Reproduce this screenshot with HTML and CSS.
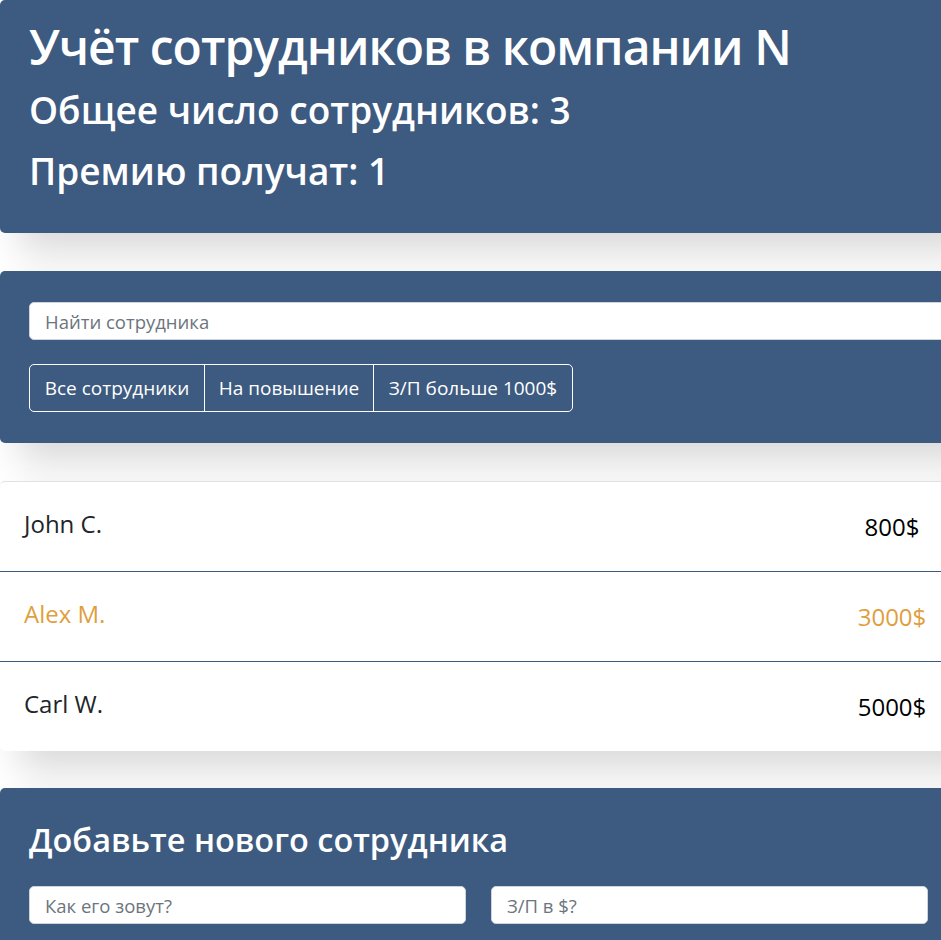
FILE: index.html
```html
<!DOCTYPE html>
<html lang="ru">
<head>
<meta charset="utf-8">
<title>Учёт сотрудников</title>
<link rel="stylesheet" href="styles.css">
</head>
<body>
<div class="app">
  <div class="app-info">
    <h1>Учёт сотрудников в компании N</h1>
    <h2>Общее число сотрудников: 3</h2>
    <h2>Премию получат: 1</h2>
  </div>

  <div class="search-panel">
    <input type="text" class="form-control search-input" placeholder="Найти сотрудника">
    <div class="btn-group">
      <button type="button" class="btn btn-all">Все сотрудники</button>
      <button type="button" class="btn btn-rise">На повышение</button>
      <button type="button" class="btn btn-salary">З/П больше 1000$</button>
    </div>
  </div>

  <ul class="app-list">
    <li class="list-item">
      <span class="item-label">John C.</span>
      <span class="item-salary">800$</span>
    </li>
    <li class="list-item increase">
      <span class="item-label">Alex M.</span>
      <span class="item-salary">3000$</span>
    </li>
    <li class="list-item">
      <span class="item-label">Carl W.</span>
      <span class="item-salary">5000$</span>
    </li>
  </ul>

  <div class="app-add-form">
    <h3>Добавьте нового сотрудника</h3>
    <form class="add-form">
      <input type="text" class="form-control new-input" placeholder="Как его зовут?">
      <input type="number" class="form-control new-input" placeholder="З/П в $?">
    </form>
  </div>
</div>
</body>
</html>
```

FILE: styles.css
```css
html, body {
  margin: 0;
  padding: 0;
  background: #fff;
  overflow: hidden;
}
body {
  font-family: "Open Sans", "Noto Sans", sans-serif;
  color: #212529;
}
.app {
  width: 1250px;
}
.app-info,
.search-panel,
.app-add-form {
  background-color: #3d5a80;
  border-radius: 5px;
  box-shadow: 19px 19px 37px rgba(0, 0, 0, 0.15);
  color: #fff;
}
.app-info {
  height: 233px;
  box-sizing: border-box;
  padding: 17px 29px 0;
}
.app-info h1 {
  margin: 0 0 2px;
  font-size: 48px;
  font-weight: 600;
  line-height: 60px;
  letter-spacing: -1px;
}
.app-info h2 {
  margin: 0;
  font-size: 37px;
  font-weight: 600;
  line-height: 61px;
}
.search-panel {
  margin-top: 38px;
  padding: 31px 29px;
}
.form-control {
  display: block;
  box-sizing: border-box;
  height: 38px;
  padding: 0 15px;
  border: 1px solid #ced4da;
  border-radius: 5px;
  background: #fff;
  font-family: inherit;
  font-size: 18.5px;
  color: #495057;
  outline: none;
}
.form-control::placeholder {
  color: #6c757d;
}
.search-input {
  width: 100%;
}
.btn-group {
  display: inline-flex;
  margin-top: 24px;
  border: 1px solid #fff;
  border-radius: 5px;
  overflow: hidden;
}
.btn {
  height: 46px;
  padding: 0 10px;
  border: 0;
  border-left: 1px solid #fff;
  background: transparent;
  color: #fff;
  font-family: inherit;
  font-size: 19px;
  cursor: pointer;
}
.btn:first-child {
  border-left: 0;
}
.btn-all { width: 174px; }
.btn-rise { width: 169px; }
.btn-salary { width: 199px; }

.app-list {
  list-style: none;
  margin: 38px 0 0;
  padding: 0;
  background: #fff;
  border-top: 1px solid #dee2e6;
  border-radius: 5px;
  box-shadow: 19px 19px 37px rgba(0, 0, 0, 0.15);
}
.list-item {
  display: flex;
  align-items: center;
  box-sizing: border-box;
  height: 90px;
  padding: 0 24px;
  border-bottom: 1px solid #3d5a80;
  font-size: 24px;
}
.list-item:last-child {
  border-bottom: 0;
  height: 89px;
}
.item-label {
  width: 808px;
  color: #212529;
  margin-top: -6px;
}
.item-salary {
  width: 120px;
  text-align: center;
  color: #000;
}
.increase .item-label,
.increase .item-salary {
  color: #e09f3e;
}
.app-add-form {
  margin-top: 37px;
  padding: 31px 29px;
}
.app-add-form h3 {
  margin: 0 0 10px;
  font-size: 32.5px;
  font-weight: 600;
  line-height: 42px;
}
.add-form {
  display: flex;
  gap: 25px;
  margin-top: 25px;
}
.new-input {
  width: 437px;
}
```
